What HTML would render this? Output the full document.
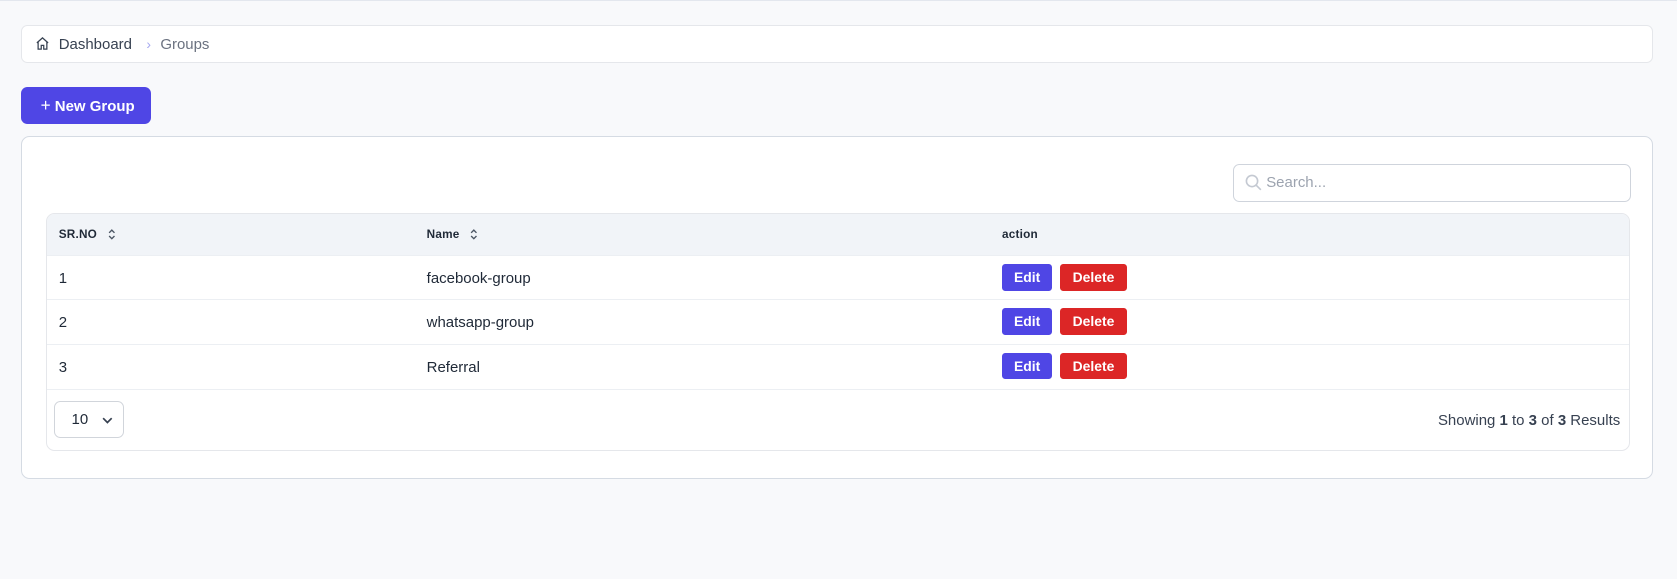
<!DOCTYPE html>
<html><head><meta charset="utf-8"><style>
html,body{margin:0;padding:0}
body{width:1568px;height:541px;background:#f8f9fb;font-family:"Liberation Sans",sans-serif;zoom:1.0695;position:relative;overflow:hidden;border-top:1px solid #e3e7ee;box-sizing:border-box}
.abs{position:absolute}
.bc{left:20px;top:22px;width:1524px;height:34px;background:#fff;border:1px solid #e5e7eb;border-radius:6px}
.bc span{position:absolute;top:10px;font-size:14px}
.btn{left:20px;top:80px;width:121px;height:35px;background:#4f46e5;border-radius:6px;color:#fff;font-size:14px;font-weight:bold;line-height:35px}
.card{left:20px;top:126px;width:1524px;height:319px;background:#fff;border:1px solid #d5dbe3;border-radius:8px}
.search{left:1153px;top:152px;width:370px;height:34px;border:1px solid #cfd4dc;border-radius:6px;background:#fff}
.tbl{left:43px;top:198px;width:1479px;height:221px;border:1px solid #e5e7eb;border-radius:8px;overflow:hidden;background:#fff}
.hd{position:absolute;left:0;top:0;width:100%;height:39px;background:#f1f4f8}
.t{position:absolute;font-size:14px;color:#1f2937}
.h{position:absolute;font-size:11px;font-weight:bold;color:#1f2937;top:13px;letter-spacing:0.2px}
.row{position:absolute;left:0;width:100%;border-top:1px solid #eceff3}
.e,.d{position:absolute;height:25px;line-height:25px;color:#fff;font-size:13px;font-weight:bold;text-align:center;border-radius:3px}
.e{background:#4f46e5;width:47px;left:893px}
.d{background:#dc2626;width:63px;left:947px}
</style></head><body>
<div class="abs bc">
<svg class="abs" style="left:12px;top:10px" width="14" height="14" viewBox="0 0 24 24" fill="none" stroke="#374151" stroke-width="2"><path d="M3 11l9-8 9 8M5 9v12h5v-6h4v6h5V9"/></svg>
<span style="left:34px;color:#374151">Dashboard</span>
<span style="left:116px;color:#a5a8f0;font-size:13px">›</span>
<span style="left:129px;color:#6b7280">Groups</span>
</div>
<div class="abs btn"><span style="margin-left:18px;font-weight:normal;font-size:16px">+</span> New Group</div>
<div class="abs card"></div>
<div class="abs search">
<svg class="abs" style="left:9px;top:8px" width="18" height="18" viewBox="0 0 24 24" fill="none" stroke="#c4c9d2" stroke-width="2"><circle cx="10" cy="10" r="7"/><path d="M15 15l6 6"/></svg>
<span class="abs" style="left:30px;top:9px;font-size:14px;color:#9ca3af">Search...</span>
</div>
<div class="abs tbl">
<div class="hd"></div>
<span class="h" style="left:11px">SR.NO</span>
<svg class="abs" style="left:56px;top:13px" width="9" height="12" viewBox="0 0 9 12" fill="none" stroke="#4b5563" stroke-width="1.3"><path d="M2 4.5l2.5-2.5 2.5 2.5M2 7.5l2.5 2.5 2.5-2.5"/></svg>
<span class="h" style="left:355px">Name</span>
<svg class="abs" style="left:395px;top:13px" width="9" height="12" viewBox="0 0 9 12" fill="none" stroke="#4b5563" stroke-width="1.3"><path d="M2 4.5l2.5-2.5 2.5 2.5M2 7.5l2.5 2.5 2.5-2.5"/></svg>
<span class="h" style="left:893px">action</span>
<div class="row" style="top:39px;height:41px"><span class="t" style="left:11px;top:13px">1</span><span class="t" style="left:355px;top:13px">facebook-group</span><div class="e" style="top:7px">Edit</div><div class="d" style="top:7px">Delete</div></div>
<div class="row" style="top:80px;height:41px"><span class="t" style="left:11px;top:13px">2</span><span class="t" style="left:355px;top:13px">whatsapp-group</span><div class="e" style="top:7px">Edit</div><div class="d" style="top:7px">Delete</div></div>
<div class="row" style="top:122px;height:41px"><span class="t" style="left:11px;top:13px">3</span><span class="t" style="left:355px;top:13px">Referral</span><div class="e" style="top:7px">Edit</div><div class="d" style="top:7px">Delete</div></div>
<div class="row" style="top:164px;height:57px">
<div class="abs" style="left:7px;top:10px;width:63px;height:33px;border:1px solid #d1d5db;border-radius:6px"><span class="t" style="left:15px;top:9px">10</span>
<svg class="abs" style="left:43px;top:12px" width="12" height="10" viewBox="0 0 12 10" fill="none" stroke="#374151" stroke-width="1.6"><path d="M2 3l4 4 4-4"/></svg></div>
<span class="t" style="right:8px;top:20px;color:#374151">Showing <b>1</b> to <b>3</b> of <b>3</b> Results</span>
</div>
</div>
</body></html>
